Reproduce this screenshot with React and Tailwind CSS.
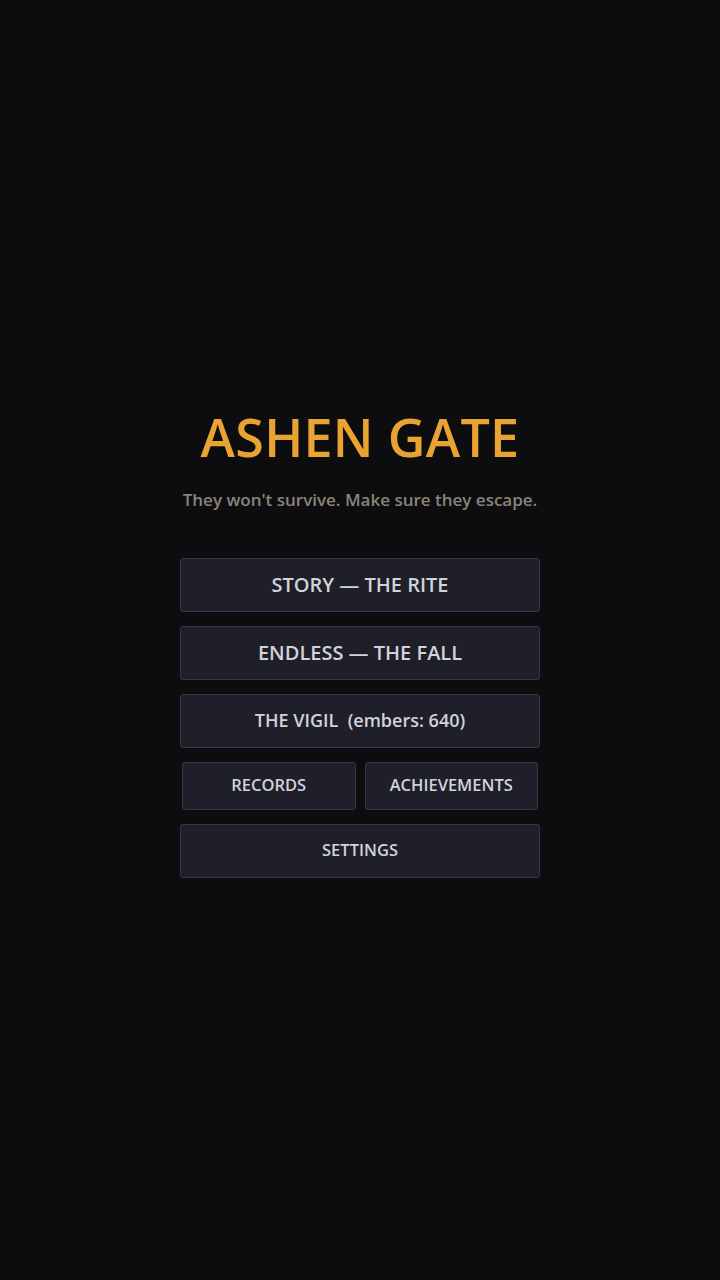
import React from "react";

const Btn = ({ children, className = "" }) => (
  <button
    className={
      "flex items-center justify-center rounded-[3px] border border-[#33374a] bg-[#1f1f29] text-[#d2d2da] font-semibold " +
      className
    }
  >
    {children}
  </button>
);

export default function App() {
  return (
    <div
      className="flex min-h-screen w-full flex-col items-center justify-center bg-[#0d0d10]"
      style={{ fontFamily: '"Open Sans", "Noto Sans", sans-serif' }}
    >
      <div className="flex w-[360px] flex-col items-center pt-[4px]">
        <h1 className="text-[52px] leading-[60px] font-semibold tracking-[0.3px] text-[#e8a333]">
          ASHEN GATE
        </h1>
        <p className="mt-[21px] text-[17px] leading-[24px] font-semibold text-[#8a8478]">
          They won't survive. Make sure they escape.
        </p>
        <div className="mt-[46px] flex w-full flex-col gap-[14px]">
          <Btn className="h-[54px] w-full text-[20px]">STORY — THE RITE</Btn>
          <Btn className="h-[54px] w-full text-[20px]">ENDLESS — THE FALL</Btn>
          <Btn className="h-[54px] w-full text-[18px]">THE VIGIL&nbsp;&nbsp;(embers: 640)</Btn>
          <div className="flex gap-[9px] px-[2px]">
            <Btn className="h-[48px] flex-1 text-[16.5px]">RECORDS</Btn>
            <Btn className="h-[48px] flex-1 text-[16.5px]">ACHIEVEMENTS</Btn>
          </div>
          <Btn className="h-[54px] w-full text-[16.5px]">SETTINGS</Btn>
        </div>
      </div>
    </div>
  );
}
